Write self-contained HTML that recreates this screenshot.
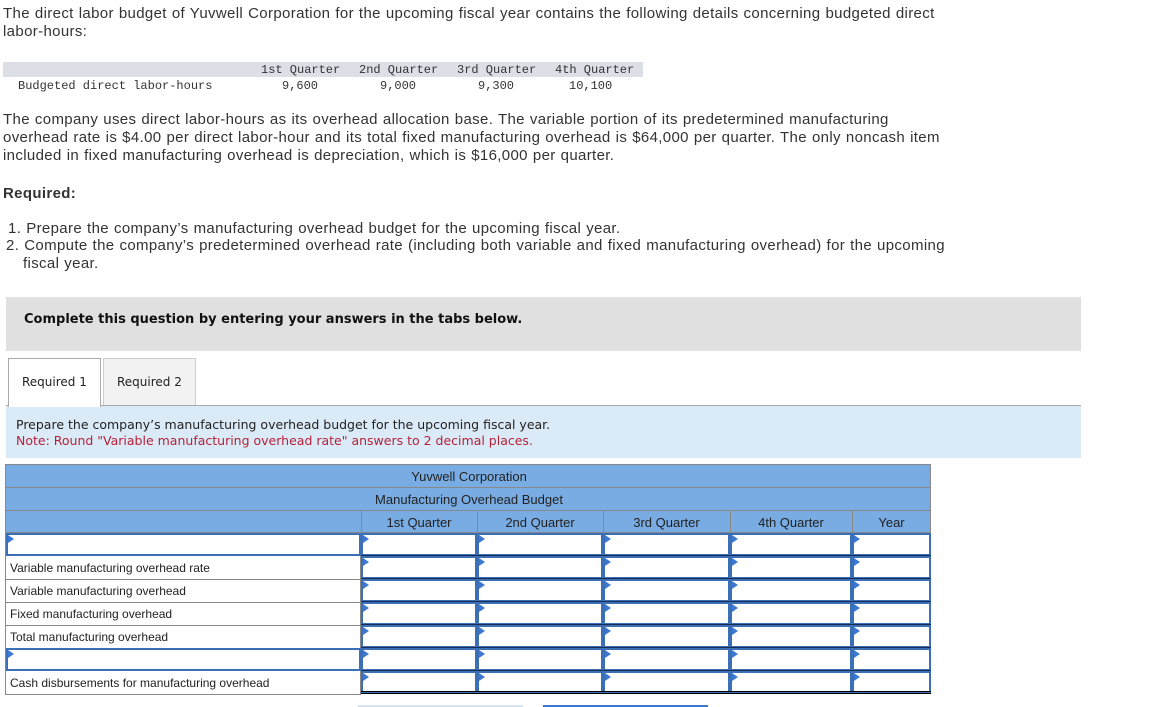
<!DOCTYPE html>
<html><head><meta charset="utf-8"><style>
*{margin:0;padding:0;box-sizing:border-box}
body{width:1153px;height:707px;overflow:hidden;background:#fff;font-family:"Liberation Sans",sans-serif;color:#222;position:relative}
.a{position:absolute}
.p{font-size:15px;line-height:18px;color:#333;letter-spacing:0.35px;word-spacing:0.5px;white-space:nowrap}
.mono{font-family:"Liberation Mono",monospace;font-size:12px;color:#333}
.inp{position:absolute;background:#fff;border:2px solid #3b6fb6}
.tri{position:absolute;left:0;top:0;width:0;height:0;border-top:4px solid transparent;border-bottom:4px solid transparent;border-left:6px solid #3b78d6}
.th{font-size:13px;color:#222;text-align:center}
</style></head><body>
<div class="a p" style="left:3px;top:5px">The direct labor budget of Yuvwell Corporation for the upcoming fiscal year contains the following details concerning budgeted direct<br>labor-hours:</div>

<div class="a" style="left:3px;top:62px;width:640px;height:15px;background:#dcdfe6"></div>
<div class="a mono" style="left:261px;top:63px">1st Quarter</div>
<div class="a mono" style="left:359px;top:63px">2nd Quarter</div>
<div class="a mono" style="left:457px;top:63px">3rd Quarter</div>
<div class="a mono" style="left:555px;top:63px">4th Quarter</div>
<div class="a mono" style="left:18px;top:79px">Budgeted direct labor-hours</div>
<div class="a mono" style="left:282px;top:79px">9,600</div>
<div class="a mono" style="left:380px;top:79px">9,000</div>
<div class="a mono" style="left:478px;top:79px">9,300</div>
<div class="a mono" style="left:569px;top:79px">10,100</div>

<div class="a p" style="left:3px;top:111px">The company uses direct labor-hours as its overhead allocation base. The variable portion of its predetermined manufacturing<br>overhead rate is $4.00 per direct labor-hour and its total fixed manufacturing overhead is $64,000 per quarter. The only noncash item<br>included in fixed manufacturing overhead is depreciation, which is $16,000 per quarter.</div>
<div class="a p" style="left:3px;top:185px;font-weight:bold">Required:</div>
<div class="a p" style="left:8px;top:220px">1. Prepare the company’s manufacturing overhead budget for the upcoming fiscal year.</div>
<div class="a p" style="left:6px;top:237px">2. Compute the company’s predetermined overhead rate (including both variable and fixed manufacturing overhead) for the upcoming</div>
<div class="a p" style="left:23px;top:255px">fiscal year.</div>

<div class="a" style="left:6px;top:297px;width:1075px;height:54px;background:#e0e0e0"></div>
<div class="a" style="left:24px;top:312px;font-family:'DejaVu Sans',sans-serif;font-weight:bold;font-size:13px;color:#111">Complete this question by entering your answers in the tabs below.</div>

<div class="a" style="left:8px;top:358px;width:93px;height:49px;background:#fff;border:1px solid #aaa;border-bottom:none;z-index:2"></div>
<div class="a" style="left:103px;top:358px;width:93px;height:47px;background:#f2f2f2;border:1px solid #ccc;border-bottom:none"></div>
<div class="a" style="left:22px;top:375px;font-family:'DejaVu Sans',sans-serif;font-size:12px;color:#222;z-index:3">Required 1</div>
<div class="a" style="left:117px;top:375px;font-family:'DejaVu Sans',sans-serif;font-size:12px;color:#222">Required 2</div>

<div class="a" style="left:6px;top:405px;width:1075px;height:53px;background:#dbeaf7;border-top:1px solid #aaa"></div>
<div class="a" style="left:16px;top:417px;font-family:'DejaVu Sans',sans-serif;font-size:12.5px;color:#222">Prepare the company’s manufacturing overhead budget for the upcoming fiscal year.</div>
<div class="a" style="left:16px;top:433px;font-family:'DejaVu Sans',sans-serif;font-size:12.5px;color:#b5223a">Note: Round "Variable manufacturing overhead rate" answers to 2 decimal places.</div>

<div class="a" style="left:5px;top:464px;width:926px;height:69px;background:#78ace3;border:1px solid #888"></div>
<div class="a" style="left:5px;top:487px;width:926px;height:1px;background:#888"></div>
<div class="a" style="left:5px;top:510px;width:926px;height:1px;background:#888"></div>
<div class="a" style="left:5px;top:532px;width:926px;height:1px;background:#888"></div>
<div class="a" style="left:361px;top:510px;width:1px;height:23px;background:#888"></div>
<div class="a" style="left:477px;top:510px;width:1px;height:23px;background:#888"></div>
<div class="a" style="left:603px;top:510px;width:1px;height:23px;background:#888"></div>
<div class="a" style="left:730px;top:510px;width:1px;height:23px;background:#888"></div>
<div class="a" style="left:852px;top:510px;width:1px;height:23px;background:#888"></div>
<div class="a th" style="left:361px;top:469px;width:216px">Yuvwell Corporation</div>
<div class="a th" style="left:361px;top:492px;width:216px">Manufacturing Overhead Budget</div>
<div class="a th" style="left:361px;top:515px;width:116px">1st Quarter</div>
<div class="a th" style="left:477px;top:515px;width:126px">2nd Quarter</div>
<div class="a th" style="left:603px;top:515px;width:127px">3rd Quarter</div>
<div class="a th" style="left:730px;top:515px;width:122px">4th Quarter</div>
<div class="a th" style="left:852px;top:515px;width:79px">Year</div>

<div class="a" style="left:5px;top:533px;width:356px;height:162px;border:1px solid #888;border-top:none"></div>
<div class="inp" style="left:6px;top:533px;width:355px;height:23px"><div class="tri"></div></div>
<div class="a" style="left:5px;top:579px;width:356px;height:1px;background:#888"></div>
<div class="a" style="left:5px;top:602px;width:356px;height:1px;background:#888"></div>
<div class="a" style="left:5px;top:625px;width:356px;height:1px;background:#888"></div>
<div class="inp" style="left:6px;top:648px;width:355px;height:23px"><div class="tri"></div></div>
<div class="a" style="left:10px;top:561px;font-size:12px;color:#222">Variable manufacturing overhead rate</div>
<div class="a" style="left:10px;top:584px;font-size:12px;color:#222">Variable manufacturing overhead</div>
<div class="a" style="left:10px;top:607px;font-size:12px;color:#222">Fixed manufacturing overhead</div>
<div class="a" style="left:10px;top:630px;font-size:12px;color:#222">Total manufacturing overhead</div>
<div class="a" style="left:10px;top:676px;font-size:12px;color:#222">Cash disbursements for manufacturing overhead</div>

<div id="g"></div>
<div class="a" style="left:361px;top:691px;width:570px;height:1px;background:#000"></div>
<div class="a" style="left:361px;top:693px;width:570px;height:1px;background:#000"></div>

<div class="a" style="left:358px;top:705px;width:165px;height:2px;background:#d5e2f0"></div>
<div class="a" style="left:543px;top:705px;width:165px;height:2px;background:#3b78c6"></div>

<script>
var cols=[[361,116],[477,126],[603,127],[730,122],[852,79]];
var h='';
for(var r=0;r<7;r++){var t=533+r*23;for(var c=0;c<5;c++){h+='<div class="inp" style="left:'+cols[c][0]+'px;top:'+t+'px;width:'+cols[c][1]+'px;height:23px"><div class="tri"></div></div>';}
if(r>0)h+='<div class="a" style="left:361px;top:'+(t-1)+'px;width:570px;height:1px;background:#1a2c55"></div>';}
document.getElementById('g').innerHTML=h;
</script>
</body></html>
